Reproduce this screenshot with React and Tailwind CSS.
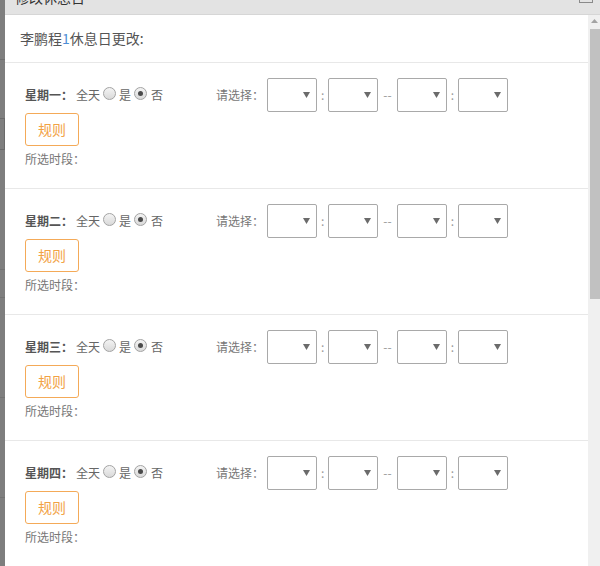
import React from "react";

const days = ["星期一", "星期二", "星期三", "星期四"];

function Radio({ checked }) {
  return (
    <span className="inline-flex w-[13px] h-[13px] mb-[3px] rounded-full border border-[#a3a3a3] bg-gradient-to-b from-[#f4f4f4] to-[#d9d9d9] items-center justify-center">
      {checked && <span className="w-[5px] h-[5px] rounded-full bg-[#4a4a4a]" />}
    </span>
  );
}

function Select() {
  return (
    <div className="w-[50px] h-[34px] border border-[#a9a9a9] rounded-[2px] bg-white flex items-center justify-end pr-[6px]">
      <svg width="7" height="6" viewBox="0 0 7 6">
        <path d="M0 0 H7 L3.5 6 Z" fill="#6b6b6b" />
      </svg>
    </div>
  );
}

function DaySection({ name }) {
  return (
    <div className="border-t border-[#e8e8e8] pl-[20px] pt-[15px] pb-[19px] h-[126px]">
      <div className="flex items-center h-[34px] text-[12px] text-[#666]">
        <div className="w-[191px] flex items-center">
          <span className="font-bold text-[#555]">{name}：</span>
          <span className="ml-[3px]">全天</span>
          <span className="ml-[3px] flex"><Radio /></span>
          <span className="ml-[3px]">是</span>
          <span className="ml-[3px] flex"><Radio checked /></span>
          <span className="ml-[4px]">否</span>
        </div>
        <span className="text-[#777]">请选择：</span>
        <div className="ml-[3px]"><Select /></div>
        <span className="mx-[4px] text-[#999]">:</span>
        <Select />
        <span className="mx-[5px] text-[#999]">--</span>
        <Select />
        <span className="mx-[4px] text-[#999]">:</span>
        <Select />
      </div>
      <button className="mt-[1px] w-[54px] h-[33px] border border-[#f4aa58] rounded-[3px] text-[14px] text-[#f2a244] bg-white">
        规则
      </button>
      <div className="mt-[3px] leading-[20px] text-[12px] text-[#777]">所选时段：</div>
    </div>
  );
}

export default function App() {
  return (
    <div
      className="w-[600px] h-[566px] flex overflow-hidden bg-white"
      style={{ fontFamily: '"Noto Sans CJK SC", "Liberation Sans", sans-serif' }}
    >
      {/* dimmed page behind the modal */}
      <div className="w-[5px] shrink-0 bg-[#7e7e7e] flex flex-col">
        <div className="h-[60px] border-b border-[#6f6f6f]" />
        <div className="mt-[58px] h-[32px] border border-[#6a6a6a] border-l-0" />
        <div className="h-[120px] border-b border-[#727272]" />
        <div className="h-[28px] border-b border-[#727272]" />
        <div className="h-[100px] border-b border-[#727272]" />
        <div className="h-[100px] border-b border-[#727272]" />
      </div>

      <div className="flex-1 flex flex-col">
        {/* title bar, mostly scrolled off */}
        <div className="h-[15px] shrink-0 bg-[#e3e3e3] border-b border-[#d6d6d6] overflow-hidden flex justify-between px-[10px]">
          <div className="-mt-[10px] text-[14px] leading-[14px] text-[#333]">修改休息日</div>
          <div className="w-[14px] h-[10px] -mt-[7px] border border-[#8a8a8a] mr-[-3px]" />
        </div>

        <div className="flex-1 flex min-h-0">
          <div className="flex-1 flex flex-col overflow-hidden">
            <div className="h-[47px] shrink-0 flex items-center pl-[15px] text-[14px] text-[#555]">
              李鹏程<span className="text-[#4d8ed6]">1</span>休息日更改:
            </div>
            {days.map((d) => (
              <DaySection key={d} name={d} />
            ))}
          </div>

          {/* scrollbar */}
          <div className="w-[12px] shrink-0 bg-[#f0f0f0] flex flex-col items-end">
            <div className="w-[12px] flex justify-center pt-[4px] h-[14px]">
              <svg width="7" height="4" viewBox="0 0 7 4">
                <path d="M0 4 H7 L3.5 0 Z" fill="#a3a3a3" />
              </svg>
            </div>
            <div className="w-[10px] h-[270px] bg-[#c1c1c1]" />
          </div>
        </div>
      </div>
    </div>
  );
}
